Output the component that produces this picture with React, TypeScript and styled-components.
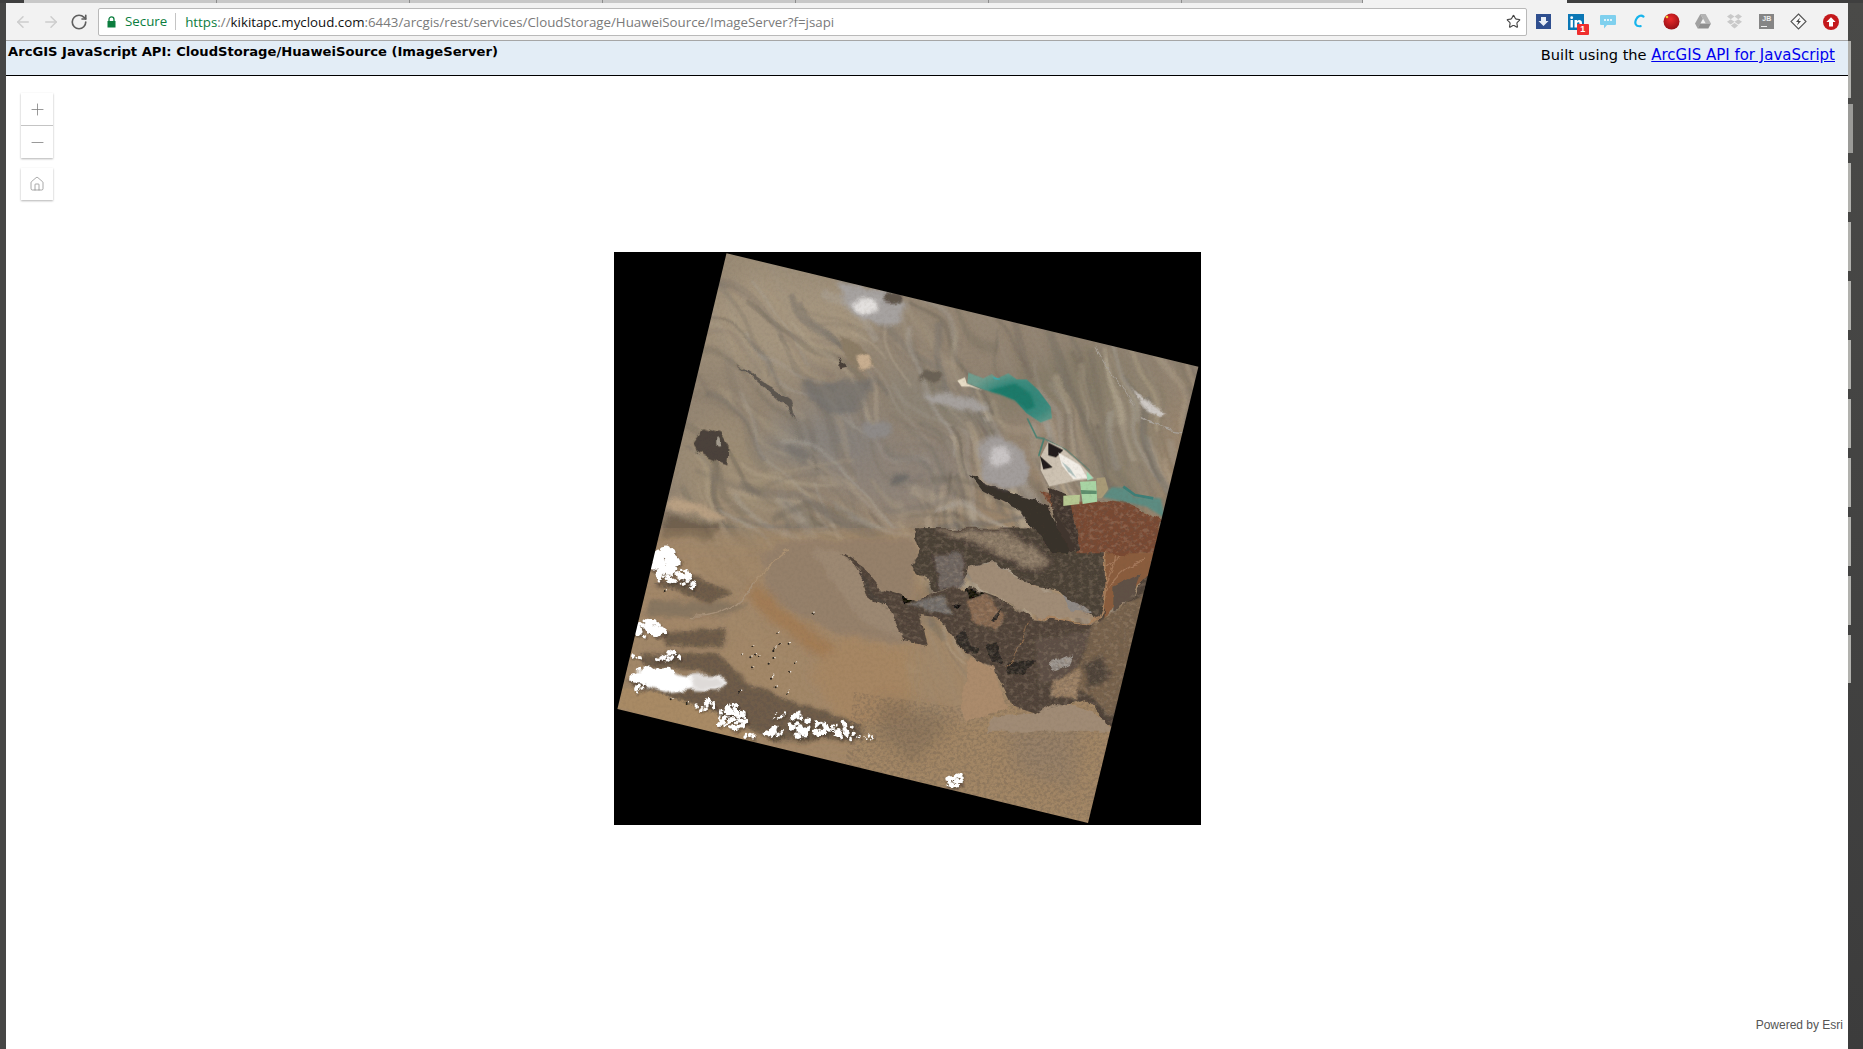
import React from "react";
import styled, { createGlobalStyle } from "styled-components";
import { ArrowLeft, ArrowRight, RotateCw, Star, Plus, Minus, House } from "lucide-react";

const Global = createGlobalStyle`
  html, body { margin: 0; padding: 0; width: 1863px; height: 1049px; overflow: hidden; background: #414141; }
  #root { width: 1863px; height: 1049px; }
`;

const Screen = styled.div`
  width: 1863px;
  height: 1049px;
  display: flex;
  flex-direction: column;
  background: #434342;
`;
const TabStrip = styled.div`
  height: 3px;
  flex: none;
  display: flex;
  padding-left: 24px;
  background: #3f3f3f;
`;
const TabSliver = styled.div<{ $w: number; $active?: boolean }>`
  width: ${(p) => p.$w}px;
  flex: none;
  box-sizing: border-box;
  background: ${(p) => (p.$active ? "#f2f2f2" : "#c8c8c8")};
  border-right: ${(p) => (p.$active ? "0" : "1px solid #8d8d8d")};
`;
const Middle = styled.div`
  flex: 1;
  min-height: 0;
  display: flex;
`;
const LeftEdge = styled.div`
  width: 6px;
  flex: none;
  background: #464645;
`;
const Browser = styled.div`
  width: 1842px;
  flex: none;
  display: flex;
  flex-direction: column;
  background: #fff;
`;
const Toolbar = styled.div`
  height: 38px;
  flex: none;
  display: flex;
  align-items: center;
  background: #f2f2f2;
  border-bottom: 1px solid #a6a6a6;
  box-sizing: border-box;
`;
const Nav = styled.div`
  width: 92px;
  flex: none;
  display: flex;
  align-items: center;
  padding-left: 8px;
  gap: 10px;
  box-sizing: border-box;
`;
const NavSlot = styled.span<{ $c: string }>`
  width: 18px;
  height: 18px;
  display: flex;
  color: ${(p) => p.$c};
`;
const Omnibox = styled.div`
  width: 1429px;
  height: 28px;
  flex: none;
  box-sizing: border-box;
  display: flex;
  align-items: center;
  background: #fff;
  border: 1px solid #b9b9b9;
  border-radius: 2px;
  padding: 0 5px 0 8px;
  font: 13.3px "Open Sans", sans-serif;
`;
const Secure = styled.span`
  color: #0b7d3e;
  margin-left: 9px;
  padding-right: 8px;
  margin-right: 9px;
  border-right: 1px solid #c4c4c4;
  line-height: 17px;
`;
const Url = styled.span`
  flex: 1;
  white-space: nowrap;
  color: #7a7a7a;
`;
const Scheme = styled.span`
  color: #0b7d3e;
`;
const Host = styled.span`
  color: #111;
`;
const Extensions = styled.div`
  display: flex;
  padding-left: 1px;
`;
const Ext = styled.span`
  position: relative;
  width: 31.85px;
  height: 20px;
  display: flex;
  align-items: center;
  justify-content: center;
  flex: none;
`;
const Badge = styled.span`
  position: absolute;
  left: 17px;
  top: 12px;
  width: 12px;
  height: 11px;
  border-radius: 1px;
  background: #ef2f2f;
  color: #fff;
  font: bold 9px/11px "Liberation Sans", sans-serif;
  text-align: center;
`;
const JB = styled.span`
  width: 15px;
  height: 15px;
  box-sizing: border-box;
  padding: 1px 0 0 3px;
  background: #858585;
  color: #eee;
  font: bold 7px/8px "Liberation Sans", sans-serif;
  position: relative;
  &::after {
    content: "";
    position: absolute;
    left: 2px;
    bottom: 2px;
    width: 6px;
    height: 1px;
    background: #eee;
  }
`;
const Header = styled.header`
  height: 35px;
  flex: none;
  box-sizing: border-box;
  display: flex;
  justify-content: space-between;
  background: #e3edf6;
  border-bottom: 1px solid #000;
  padding: 2px 13px 0 2px;
  color: #000;
`;
const Title = styled.h1`
  margin: 0;
  font: bold 13.13px/17px "DejaVu Sans", sans-serif;
`;
const Built = styled.div`
  padding-top: 3px;
  font: 14.6px/18px "DejaVu Sans", sans-serif;
`;
const ApiLink = styled.a`
  color: #0000ee;
  font-size: 15px;
`;
const MapView = styled.main`
  position: relative;
  flex: 1;
  min-height: 0;
  padding: 176px 0 0 608px;
  background: #fff;
`;
const WidgetStack = styled.div`
  position: absolute;
  left: 15px;
  top: 17px;
  display: flex;
  flex-direction: column;
  gap: 10px;
`;
const WidgetGroup = styled.div`
  display: flex;
  flex-direction: column;
  width: 32px;
  background: #fff;
  box-shadow: 0 1px 2px rgba(0, 0, 0, 0.3);
`;
const WidgetButton = styled.div`
  width: 32px;
  height: 32px;
  display: flex;
  align-items: center;
  justify-content: center;
  color: #7d7d7d;
  & + & {
    border-top: 1px solid #c4c4c4;
  }
`;
const Attribution = styled.div`
  position: absolute;
  right: 5px;
  bottom: 17px;
  font: 12px/14px "Liberation Sans", sans-serif;
  color: #555;
`;
const RightEdge = styled.div`
  flex: 1;
  display: flex;
  flex-direction: column;
  padding-top: 38px;
  background: linear-gradient(#4a4a48, #3c3c3c);
`;
const Tick = styled.div<{ $h: number; $gap: number; $thumb?: boolean }>`
  flex: none;
  height: ${(p) => p.$h}px;
  width: ${(p) => (p.$thumb ? 5 : 3)}px;
  margin-bottom: ${(p) => p.$gap}px;
  background: ${(p) => (p.$thumb ? "#9b9b98" : "#b1b1ad")};
`;

function rng(seed: number) {
  let s = seed;
  return () => {
    s = (s * 16807) % 2147483647;
    return (s - 1) / 2147483646;
  };
}

type Cl = [number, number, number, number, number, number];
// cx, cy, rx, ry, count, blob radius — in 3x coordinates of the lower-left crop
const clouds: Cl[] = [
  [165, 62, 38, 34, 60, 12],
  [190, 105, 60, 22, 36, 8],
  [235, 128, 24, 14, 9, 6],
  [115, 268, 38, 24, 34, 10],
  [152, 275, 16, 8, 7, 8],
  [75, 350, 18, 6, 6, 6],
  [175, 350, 30, 12, 18, 6],
  [125, 410, 60, 26, 60, 11],
  [85, 440, 12, 18, 8, 6],
  [290, 495, 34, 14, 18, 6],
  [370, 530, 44, 40, 80, 7],
  [420, 585, 20, 6, 8, 6],
  [490, 575, 30, 16, 16, 9],
  [570, 555, 30, 34, 40, 8],
  [630, 565, 26, 22, 26, 8],
  [700, 575, 40, 26, 36, 6],
  [760, 590, 30, 8, 10, 4],
  [500, 525, 26, 8, 12, 4],
  [1030, 722, 26, 20, 34, 7],
];

const dots: [number, number][] = [
  [500, 278], [432, 318], [495, 325], [512, 315], [538, 314], [392, 340], [437, 347], [450, 352],
  [498, 345], [420, 355], [478, 368], [558, 372], [428, 382], [536, 390], [488, 410], [496, 436],
  [535, 455], [395, 458], [190, 475], [232, 486], [160, 153], [615, 218],
];

function CloudField() {
  const r = rng(4242);
  const items: React.ReactNode[] = [];
  const shadows: React.ReactNode[] = [];
  clouds.forEach((c, i) => {
    for (let k = 0; k < c[4]; k++) {
      const a = r() * Math.PI * 2;
      const d = Math.sqrt(r());
      const x = c[0] + Math.cos(a) * d * c[2];
      const y = c[1] + Math.sin(a) * d * c[3];
      const rad = c[5] * (0.4 + r() * 0.7);
      items.push(<circle key={`${i}-${k}`} cx={x} cy={y} r={rad} fill="#fff" />);
      shadows.push(<circle key={`${i}-${k}`} cx={x + 4} cy={y + 6} r={rad} fill="#2b2520" />);
    }
  });
  return (
    <g transform="translate(-4,288) scale(.3333)">
      <g opacity=".45" filter="url(#b1)">{shadows}</g>
      <path d="M80 395 L140 385 L230 410 L330 405 L348 430 L320 452 L240 448 L170 460 L110 440Z" fill="#fff" filter="url(#b1)" />
      <g filter="url(#b05)">{items}</g>
      <path d="M240 405 L325 408 L345 430 L320 450 L250 448Z" fill="#dedad8" filter="url(#b2)" />
      {dots.map((d, i) => (
        <g key={i}>
          <circle cx={d[0] - 2} cy={d[1] + 3} r="3" fill="#26211d" />
          <circle cx={d[0] + 3} cy={d[1] - 1} r="2.2" fill="#f1ece6" />
        </g>
      ))}
    </g>
  );
}

function WindLines() {
  const r = rng(991);
  const paths: React.ReactNode[] = [];
  const light = ["#b9aa90", "#c4b69e", "#ac9c84", "#b0aca6"];
  const dark = ["#6f665c", "#655d52", "#7b7266", "#6c6864"];
  const add = (n: number, x0: number, x1: number, y0: number, y1: number, ang: number, spread: number, curl: number, key: string) => {
    for (let i = 0; i < n; i++) {
      const x = x0 + r() * (x1 - x0);
      const y = y0 + r() * (y1 - y0);
      const a = ((ang + (r() - 0.5) * spread) * Math.PI) / 180;
      const len = 50 + r() * 120;
      const bend = (r() - 0.5) * curl;
      const ex = x + Math.cos(a) * len;
      const ey = y + Math.sin(a) * len;
      const mx = (x + ex) / 2 - Math.sin(a) * bend;
      const my = (y + ey) / 2 + Math.cos(a) * bend;
      const pal = r() > 0.5 ? light : dark;
      paths.push(
        <path
          key={key + i}
          d={`M${x.toFixed(1)} ${y.toFixed(1)}Q${mx.toFixed(1)} ${my.toFixed(1)} ${ex.toFixed(1)} ${ey.toFixed(1)}`}
          stroke={pal[Math.floor(r() * pal.length)]}
          strokeWidth={1.5 + r() * 7}
          strokeOpacity={0.15 + r() * 0.25}
          fill="none"
        />,
      );
    }
  };
  add(120, 60, 340, 10, 320, 48, 40, 60, "a");
  add(170, 300, 570, 70, 340, 70, 12, 22, "b");
  add(70, 60, 340, 220, 340, 20, 50, 70, "c");
  return <g filter="url(#b03)">{paths}</g>;
}

const massifD =
  "M65 70 L130 112 L185 180 L240 197 L295 215 L340 185 L420 172 L435 185 L445 170 L540 205 L640 265 L820 282 L905 235 L985 130 L965 320 L880 590 L800 510 L640 550 L580 530 L530 430 L440 370 L380 290 L340 260 L300 255 L320 345 L250 330 L215 250 L140 190 L120 130 Z";
const upperDarkD =
  "M280 -5 L860 -10 L850 275 L790 250 L720 180 L640 165 L520 95 L445 115 L420 175 L345 180 L300 135 L270 105 L300 60 Z";
const bandsD =
  "M130 130 L260 110 L370 160 L300 190 L180 150Z M160 280 L350 260 L340 320 L170 320Z M90 340 L330 340 L400 420 L260 390 L100 380Z M40 420 L340 400 L560 490 L780 560 L760 600 L500 600 L300 520Z";

function SatelliteImage() {
  return (
    <svg width="587" height="573" viewBox="0 0 587 573" style={{ display: "block" }}>
      <defs>
        <clipPath id="scene">
          <polygon points="112.5,1.3 584.4,114.7 474,571 3.4,457" />
        </clipPath>
        <clipPath id="massifClip">
          <path transform="translate(206,278) scale(.3333)" d={massifD + " " + upperDarkD} />
        </clipPath>
        <clipPath id="bandClip">
          <path transform="translate(-4,288) scale(.3333)" d={bandsD} />
        </clipPath>
        <clipPath id="southClip">
          <polygon points="240,440 340,455 420,430 510,420 475,575 230,520" />
        </clipPath>
        <clipPath id="deltaClip">
          <path transform="translate(306,98) scale(.3333)" d="M360 420 L480 455 L560 450 L610 455 L725 510 L700 610 L470 610 L440 540Z" />
        </clipPath>
        <linearGradient id="land" x1="0" y1="0" x2="0.35" y2="1">
          <stop offset="0" stopColor="#9a8b75" />
          <stop offset=".45" stopColor="#918372" />
          <stop offset=".72" stopColor="#a18769" />
          <stop offset="1" stopColor="#a38767" />
        </linearGradient>
        <radialGradient id="lake" cx=".6" cy=".55" r=".6">
          <stop offset="0" stopColor="#2a8273" />
          <stop offset=".6" stopColor="#3b8b7e" />
          <stop offset="1" stopColor="#6f9c8d" />
        </radialGradient>
        <filter id="soft" filterUnits="userSpaceOnUse" x="0" y="0" width="587" height="573">
          <feGaussianBlur stdDeviation=".6" />
        </filter>
        <filter id="b03"><feGaussianBlur stdDeviation="1.2" /></filter>
        <filter id="b05" x="-20%" y="-20%" width="140%" height="140%"><feGaussianBlur stdDeviation="1.3" /></filter>
        <filter id="b1" x="-30%" y="-30%" width="160%" height="160%"><feGaussianBlur stdDeviation="3" /></filter>
        <filter id="b2" x="-40%" y="-40%" width="180%" height="180%"><feGaussianBlur stdDeviation="7" /></filter>
        <filter id="b4" x="-50%" y="-50%" width="200%" height="200%"><feGaussianBlur stdDeviation="14" /></filter>
        <filter id="b8" x="-60%" y="-60%" width="220%" height="220%"><feGaussianBlur stdDeviation="30" /></filter>
        <filter id="rough" filterUnits="userSpaceOnUse" x="0" y="0" width="587" height="573">
          <feTurbulence type="fractalNoise" baseFrequency="0.06" numOctaves="4" seed="7" result="n" />
          <feDisplacementMap in="SourceGraphic" in2="n" scale="9" xChannelSelector="R" yChannelSelector="G" />
        </filter>
        <filter id="swirl" filterUnits="userSpaceOnUse" x="0" y="0" width="587" height="573">
          <feTurbulence type="fractalNoise" baseFrequency="0.012" numOctaves="2" seed="3" result="n" />
          <feDisplacementMap in="SourceGraphic" in2="n" scale="40" xChannelSelector="R" yChannelSelector="G" />
        </filter>
        <filter id="streak" x="-20%" y="-20%" width="140%" height="140%">
          <feTurbulence type="fractalNoise" baseFrequency="0.005 0.11" numOctaves="4" seed="11" />
          <feColorMatrix values="0 0 0 0 .35  0 0 0 0 .32  0 0 0 0 .28  1.9 0 0 0 -.62" />
        </filter>
        <filter id="grain" x="0" y="0" width="100%" height="100%">
          <feTurbulence type="fractalNoise" baseFrequency="0.32" numOctaves="3" seed="5" />
          <feColorMatrix values="0 0 0 0 .12  0 0 0 0 .09  0 0 0 0 .06  2.6 0 0 0 -1.15" />
        </filter>
        <filter id="ridge" x="0" y="0" width="100%" height="100%">
          <feTurbulence type="fractalNoise" baseFrequency="0.3 0.36" numOctaves="3" seed="9" />
          <feColorMatrix values="0 0 0 0 .12  0 0 0 0 .09  0 0 0 0 .07  4 0 0 0 -1.7" />
        </filter>
        <filter id="ridgeHi" x="0" y="0" width="100%" height="100%">
          <feTurbulence type="fractalNoise" baseFrequency="0.2 0.26" numOctaves="3" seed="31" />
          <feColorMatrix values="0 0 0 0 .72  0 0 0 0 .55  0 0 0 0 .4  4 0 0 0 -1.9" />
        </filter>
      </defs>
      <rect width="587" height="573" fill="#000" />
      <g clipPath="url(#scene)">
        <g filter="url(#soft)">
          <rect width="587" height="573" fill="url(#land)" />

          {/* broad colour fields and swirls */}
          <g filter="url(#swirl)">
            <g filter="url(#b4)">
              <ellipse cx="170" cy="70" rx="90" ry="55" fill="#a5957e" />
              <ellipse cx="120" cy="220" rx="70" ry="50" fill="#9c8c75" />
              <ellipse cx="215" cy="190" rx="60" ry="28" fill="#84807c" opacity=".85" />
              <ellipse cx="290" cy="225" rx="70" ry="28" fill="#8c8379" opacity=".85" />
              <ellipse cx="330" cy="150" rx="55" ry="30" fill="#8a8172" />
              <ellipse cx="460" cy="130" rx="80" ry="30" fill="#857a68" />
              <ellipse cx="510" cy="200" rx="46" ry="80" fill="#8f8370" />
              <ellipse cx="60" cy="340" rx="40" ry="60" fill="#a0846a" />
              <ellipse cx="120" cy="290" rx="55" ry="40" fill="#98866f" />
            </g>
            <WindLines />
          </g>
          <g transform="rotate(68 430 190)" opacity=".14">
            <rect x="240" y="0" width="400" height="380" filter="url(#streak)" />
          </g>

          {/* upper-left features, 3x-wide crop coordinates */}
          <g filter="url(#rough)">
            <g transform="translate(-14,-12) scale(.3953,.3333)">
              <path d="M600 125 L720 155 L775 190 L760 250 L700 255 L640 225 L610 170Z" fill="#a6a2a0" filter="url(#b2)" />
              <ellipse cx="672" cy="198" rx="32" ry="24" fill="#e3e0de" filter="url(#b2)" />
              <ellipse cx="738" cy="176" rx="25" ry="17" fill="#5f554c" filter="url(#b1)" />
              <path d="M605 290 L655 310 L695 375 L660 392 L620 360Z" fill="#8b7b66" filter="url(#b1)" />
              <path d="M645 345 L680 350 L692 382 L660 390Z" fill="#c8ae90" filter="url(#b1)" />
              <path d="M598 350 L625 380 L608 385Z" fill="#4a3f37" />
              <path d="M345 370 L480 480 L495 540 L470 500 Z" fill="#5c5650" filter="url(#b05)" />
              <path d="M510 430 L700 420 L650 520 L560 520Z" fill="#72706e" filter="url(#b2)" opacity=".7" />
              <path d="M470 610 L530 630 L525 665 L480 650Z" fill="#716d69" filter="url(#b2)" opacity=".6" />
              <ellipse cx="700" cy="570" rx="38" ry="26" fill="#8e8a88" filter="url(#b2)" />
              <ellipse cx="835" cy="412" rx="28" ry="18" fill="#6b6255" filter="url(#b1)" />
              <ellipse cx="760" cy="720" rx="28" ry="14" fill="#6d6a66" filter="url(#b2)" />
              <path d="M235 605 L262 562 L305 578 L325 620 L322 680 L280 660 L245 635Z" fill="#4c433b" />
              <ellipse cx="300" cy="605" rx="6" ry="12" fill="#a59d90" />
              <path d="M165 820 L300 860 L290 900 L150 900Z" fill="#5c5040" opacity=".65" filter="url(#b2)" />
              <path d="M160 800 L330 850 L310 820 L190 770Z" fill="#b9a083" filter="url(#b2)" />
            </g>
          </g>

          {/* lower-left plain, mountains */}
          <g filter="url(#rough)">
            <g transform="translate(-4,288) scale(.3333)">
              <path d="M-20 -20 L940 -20 L940 640 L-20 640Z" fill="#a38869" filter="url(#b8)" opacity=".85" />
              <path d="M460 30 L560 0 L920 0 L900 310 L700 290 L470 170Z" fill="#95806a" filter="url(#b2)" />
              <path d="M600 30 L700 30 L900 300 L760 250Z" fill="#9c8872" filter="url(#b2)" />
              <path d="M440 130 C520 250 680 280 760 430 L700 450 C620 300 500 280 410 160Z" fill="#a27a53" filter="url(#b4)" />
              <path d="M700 290 L900 330 L900 600 L700 560 L600 400Z" fill="#a68664" filter="url(#b4)" />
              <path d="M120 180 L420 190 L340 230 L110 230Z" fill="#887660" filter="url(#b2)" />
              <path d={bandsD} fill="#6f5d49" filter="url(#b2)" />
              <path d="M20 505 L40 440 L200 475 L330 520 L440 600 L380 600Z" fill="#a88a65" filter="url(#b1)" />
              <path d="M540 30 C500 40 470 90 430 130" stroke="#ab9172" strokeWidth="4" fill="none" />
              <path d="M430 130 C400 190 320 240 240 230" stroke="#a8927a" strokeWidth="4" fill="none" />
            </g>
          </g>
          <g clipPath="url(#bandClip)">
            <rect width="587" height="573" filter="url(#ridge)" opacity=".45" />
          </g>
          {/* rough southern terrain */}
          <g filter="url(#rough)">
            <path d="M250 470 L360 470 L420 440 L500 430 L470 575 L240 520Z" fill="#a38766" filter="url(#b1)" />
            <path d="M270 445 L340 470 L300 510 L260 480Z" fill="#7f6a54" filter="url(#b2)" opacity=".5" />
            <path d="M390 470 L470 470 L460 540 L400 520Z" fill="#8f7c68" filter="url(#b2)" opacity=".5" />
          </g>
          <g clipPath="url(#southClip)">
            <rect width="587" height="573" filter="url(#ridge)" opacity=".26" />
          </g>

          {/* dark massif */}
          <g filter="url(#rough)">
            <g transform="translate(206,278) scale(.3333)">
              <path d="M860 -10 L1030 -10 L985 140 L890 210 L850 270 L820 260 Z" fill="#8a5c3e" />
              <path d={upperDarkD} fill="#4a3f36" />
              <path d="M350 0 L560 0 L700 100 L640 120 L480 50Z" fill="#8d7c68" filter="url(#b2)" />
              <path d="M340 75 L430 70 L430 170 L360 175 Z" fill="#6f6863" filter="url(#b1)" />
              <path d="M445 115 L520 100 L640 170 L730 195 L825 265 L660 262 L560 212 L450 160 Z" fill="#a08c76" />
              <path d="M730 190 L815 250 L760 245Z" fill="#8f8a86" filter="url(#b05)" />
              <path d={massifD} fill="#4f4338" />
              <path d="M260 225 L370 195 L395 250 L330 245Z" fill="#74716e" filter="url(#b1)" />
              <path d="M440 205 L495 195 L560 250 L530 300 L470 285Z" fill="#8b6c53" filter="url(#b1)" />
              <path d="M640 330 L820 300 L760 430 L660 470Z" fill="#5d5044" filter="url(#b1)" />
              <path d="M820 280 L985 180 L950 330 L880 560 L790 480 L700 460 L780 400Z" fill="#78634e" filter="url(#b1)" />
              <path d="M790 400 L850 375 L870 440 L810 480Z" fill="#4e4339" filter="url(#b2)" />
              <path d="M690 400 L760 370 L750 405 L700 425Z" fill="#9d9791" filter="url(#b05)" />
              <path d="M880 170 L960 130 L930 210 L880 240Z" fill="#5f5145" filter="url(#b05)" />
              <path d="M705 450 L780 415 L770 510 L690 490Z" fill="#9d8266" filter="url(#b1)" />
              <path d="M520 560 L640 550 L700 515 L860 565 L880 605 L500 605Z" fill="#a08b74" />
              <path d="M450 385 L520 410 L560 530 L440 580 L420 540Z" fill="#ab8b6c" />
              <path d="M100 110 L180 200 L200 240 L150 190Z" fill="#4a3f38" />
              <path d="M505 275 L550 225 L530 270Z" fill="#2c2623" />
              <path d="M245 198 L285 213 L255 216Z" fill="#080706" />
              <path d="M438 177 L492 190 L445 200Z" fill="#080706" />
              <path d="M400 225 L425 228 L410 240Z" fill="#111" />
              <path d="M430 290 L460 360 L440 370 L410 320Z" fill="#2f2925" filter="url(#b05)" />
              <path d="M450 345 L475 350 L470 375 L455 370Z M495 345 L530 340 L545 400 L515 395Z M560 395 L650 385 L610 430 L570 440Z" fill="#2a2622" filter="url(#b05)" />
              <path d="M660 262 C720 268 770 285 800 282 C840 275 850 240 855 190 C858 130 860 50 850 0" stroke="#a9835f" strokeWidth="5" fill="none" />
              <path d="M850 200 C880 140 920 110 975 90 M860 110 C900 70 930 50 990 40 M855 170 C880 120 900 60 880 0" stroke="#a5795a" strokeWidth="4" fill="none" />
              <path d="M625 275 C610 330 590 370 560 410" stroke="#98704e" strokeWidth="3" fill="none" />
            </g>
          </g>
          <g clipPath="url(#massifClip)">
            <rect width="587" height="573" filter="url(#ridge)" opacity=".3" />
            <rect width="587" height="573" filter="url(#ridgeHi)" opacity=".16" />
          </g>

          {/* salt lake, ponds, delta */}
          <g filter="url(#rough)">
            <g transform="translate(306,98) scale(.3333)">
              <path d="M360 420 L480 455 L560 450 L610 455 L725 510 L700 610 L470 610 L440 540Z" fill="#7a4a32" />
              <path d="M380 410 L450 440 L480 600 L430 600Z" fill="#3f342d" />
              <path d="M150 375 L245 420 L345 450 L385 470 L450 610 L400 610 L300 480 L190 425 Z" fill="#38302b" />
              <path d="M170 280 L240 255 L310 300 L330 360 L320 410 L250 420 L190 385Z" fill="#a29d9b" filter="url(#b2)" />
              <ellipse cx="240" cy="320" rx="36" ry="30" fill="#c9c5c5" filter="url(#b2)" />
              <path d="M0 135 L90 125 L210 170 L170 190 L40 160Z" fill="#a6a19e" filter="url(#b2)" />
              <path d="M630 110 L665 140 L735 190 L720 200 L670 170Z" fill="#cfcac6" filter="url(#b1)" />
              <path d="M660 200 C700 225 750 240 790 245" stroke="#a9a39b" strokeWidth="4" fill="none" />
              <path d="M525 -5 C570 70 610 110 640 170" stroke="#aaa39a" strokeWidth="3" fill="none" />
            </g>
          </g>
          <g clipPath="url(#deltaClip)">
            <rect width="587" height="573" filter="url(#ridge)" opacity=".3" />
            <rect width="587" height="573" filter="url(#ridgeHi)" opacity=".18" />
          </g>
          <g transform="translate(306,98) scale(.3333)">
            <path d="M145 68 L190 85 L215 72 L232 85 L265 70 L290 88 L320 88 L355 120 L392 170 L396 205 L362 218 L320 190 L285 150 L240 132 L195 120 L142 100 Z" fill="url(#lake)" filter="url(#b05)" />
            <path d="M205 122 L285 100 L330 130 L345 170 L320 180 L285 150 L240 132Z" fill="#1c7a6a" filter="url(#b1)" />
            <path d="M112 92 L135 82 L140 100 L190 122 L150 110 L125 110Z" fill="#e6dcc6" filter="url(#b05)" />
            <path d="M220 84 L240 88" stroke="#25b8c4" strokeWidth="3" />
            <path d="M322 205 L350 262 L372 266 L356 318" stroke="#4c8273" strokeWidth="5" fill="none" />
            <path d="M372 266 L440 300 L510 362" stroke="#4f7d70" strokeWidth="3" fill="none" />
            <path d="M362 320 L385 275 L425 292 L480 340 L522 385 L470 392 L388 410 L362 360Z" fill="#cdc2b2" filter="url(#b05)" />
            <path d="M385 278 L430 300 L408 322 L385 316Z M360 318 L398 352 L370 358Z" fill="#231e1b" filter="url(#b05)" />
            <path d="M415 308 L480 345 L503 385 L460 388 L425 345Z" fill="#f2eee6" filter="url(#b05)" />
            <path d="M500 365 L520 385 L502 392Z" fill="#9edbb6" />
            <path d="M425 335 L450 355 L470 385 L445 365Z" fill="#9fb6b4" opacity=".8" />
            <path d="M548 442 L575 412 L620 415 L640 440 L722 445 L735 505 L680 470 L600 452Z" fill="#5c8c82" filter="url(#b1)" />
            <path d="M610 410 L645 435 L700 445" stroke="#3d7f78" strokeWidth="8" fill="none" />
            <path d="M480 395 L528 393 L532 455 L488 462Z" fill="#a8d4a4" filter="url(#b05)" />
            <path d="M482 420 L530 422 L530 432 L484 432Z" fill="#5f8f6e" />
            <path d="M430 437 L480 434 L478 462 L430 468Z" fill="#b7c892" filter="url(#b05)" />
            <path d="M530 384 L555 382 L565 418 L545 445 L532 445Z" fill="#a89a77" filter="url(#b05)" />
          </g>

          <rect width="587" height="573" filter="url(#grain)" opacity=".08" />
          <g filter="url(#rough)">
            <CloudField />
          </g>
        </g>
      </g>
    </svg>
  );
}

const tickRows: { h: number; gap: number; thumb?: boolean }[] = [
  { h: 57, gap: 6 },
  { h: 49, gap: 10, thumb: true },
  { h: 49, gap: 10 },
  { h: 49, gap: 10 },
  { h: 49, gap: 10 },
  { h: 49, gap: 10 },
  { h: 49, gap: 10 },
  { h: 49, gap: 10 },
  { h: 49, gap: 10 },
  { h: 49, gap: 10 },
  { h: 48, gap: 0 },
];

const tabWidths = [193, 193, 193, 193, 193, 193, 181];

export default function App() {
  return (
    <Screen>
      <Global />
      <TabStrip>
        {tabWidths.map((w, i) => (
          <TabSliver key={i} $w={w} />
        ))}
        <TabSliver $w={204} $active />
      </TabStrip>
      <Middle>
        <LeftEdge />
        <Browser>
          <Toolbar>
            <Nav>
              <NavSlot $c="#cdcdcd"><ArrowLeft size={18} strokeWidth={2} /></NavSlot>
              <NavSlot $c="#cdcdcd"><ArrowRight size={18} strokeWidth={2} /></NavSlot>
              <NavSlot $c="#5f5f5f"><RotateCw size={18} strokeWidth={2.2} /></NavSlot>
            </Nav>
            <Omnibox>
              <svg width="9" height="12" viewBox="0 0 9 12">
                <path d="M2 5V3.4a2.5 2.5 0 0 1 5 0V5" fill="none" stroke="#0b7d3e" strokeWidth="1.3" />
                <rect x="0.5" y="5" width="8" height="6.5" fill="#0b7d3e" />
              </svg>
              <Secure>Secure</Secure>
              <Url>
                <Scheme>https</Scheme>://<Host>kikitapc.mycloud.com</Host>:6443/arcgis/rest/services/CloudStorage/HuaweiSource/ImageServer?f=jsapi
              </Url>
              <Star size={15} strokeWidth={1.8} color="#444" />
            </Omnibox>
            <Extensions>
              <Ext>
                <svg width="15" height="15" viewBox="0 0 15 15">
                  <rect width="15" height="15" fill="#2f4f8f" />
                  <path d="M5 3h5v4h2.5L7.5 12 2.5 7H5Z" fill="#e8eef6" />
                </svg>
              </Ext>
              <Ext>
                <svg width="16" height="16" viewBox="0 0 16 16">
                  <rect width="16" height="16" fill="#0b77b5" />
                  <rect x="2.5" y="6" width="2.4" height="7.5" fill="#fff" />
                  <circle cx="3.7" cy="3.7" r="1.4" fill="#fff" />
                  <path d="M6.5 6H9v1.1C10.4 5.4 14 5.6 14 9v4.5h-2.5V9.6C11.5 7.6 9 7.8 9 9.8v3.7H6.5Z" fill="#fff" />
                </svg>
                <Badge>1</Badge>
              </Ext>
              <Ext>
                <svg width="16" height="14" viewBox="0 0 16 14">
                  <path d="M1 0h14a1 1 0 0 1 1 1v8a1 1 0 0 1-1 1H7l-3 3.5V10H1a1 1 0 0 1-1-1V1a1 1 0 0 1 1-1Z" fill="#7fd0ee" />
                  <circle cx="5" cy="5" r="1" fill="#fff" /><circle cx="8" cy="5" r="1" fill="#fff" /><circle cx="11" cy="5" r="1" fill="#fff" />
                </svg>
              </Ext>
              <Ext>
                <svg width="12" height="15" viewBox="0 0 12 15">
                  <path d="M10.5 2.6C8 .4 4.6 2 3 5.6c-1.6 3.8-.4 7.2 4.6 6.6" fill="none" stroke="#16b4ec" strokeWidth="2.2" strokeLinecap="round" />
                </svg>
              </Ext>
              <Ext>
                <svg width="17" height="17" viewBox="0 0 17 17">
                  <defs>
                    <radialGradient id="ball" cx=".45" cy=".35" r=".7">
                      <stop offset="0" stopColor="#ec2a2a" />
                      <stop offset="1" stopColor="#8f0d14" />
                    </radialGradient>
                  </defs>
                  <circle cx="8.5" cy="8.5" r="8" fill="url(#ball)" />
                  <circle cx="4" cy="4" r="1.3" fill="#f2d23a" />
                </svg>
              </Ext>
              <Ext>
                <svg width="16" height="15" viewBox="0 0 16 15">
                  <path d="M5.4 0h5.2l5.4 9.6h-5.2Z" fill="#b3b3b3" />
                  <path d="M5.4 0 8 4.7 2.7 14.4 0 9.6Z" fill="#a1a1a1" />
                  <path d="M5.2 9.6H16L13.3 14.4H2.7Z" fill="#8f8f8f" />
                </svg>
              </Ext>
              <Ext>
                <svg width="15" height="15" viewBox="0 0 15 15" fill="#c9c9c9">
                  <path d="M3.7 0 7.5 2.6 3.7 5.2 0 2.6Z" /><path d="M11.3 0 15 2.6l-3.7 2.6L7.5 2.6Z" />
                  <path d="M3.7 5.2 7.5 7.8 3.7 10.4 0 7.8Z" /><path d="M11.3 5.2 15 7.8l-3.7 2.6L7.5 7.8Z" />
                  <path d="M3.8 11.4 7.5 9l3.7 2.4L7.5 14.4Z" />
                </svg>
              </Ext>
              <Ext><JB>JB</JB></Ext>
              <Ext>
                <svg width="17" height="17" viewBox="0 0 17 17">
                  <path d="M8.5 1 16 8.5 8.5 16 1 8.5Z" fill="#fafafa" stroke="#555" strokeWidth="1.1" />
                  <path d="M10 4.5 6 9h2.3L7 12.5 11 8H8.7Z" fill="#444" />
                </svg>
              </Ext>
              <Ext>
                <svg width="16" height="16" viewBox="0 0 16 16">
                  <circle cx="8" cy="8" r="8" fill="#c4191c" />
                  <path d="M8 3.2 12.6 8H10v4.4H6V8H3.4Z" fill="#fff" />
                </svg>
              </Ext>
            </Extensions>
          </Toolbar>
          <Header>
            <Title>ArcGIS JavaScript API: CloudStorage/HuaweiSource (ImageServer)</Title>
            <Built>
              Built using the <ApiLink href="#arcgis">ArcGIS API for JavaScript</ApiLink>
            </Built>
          </Header>
          <MapView>
            <SatelliteImage />
            <WidgetStack>
              <WidgetGroup>
                <WidgetButton><Plus size={19} strokeWidth={1} /></WidgetButton>
                <WidgetButton><Minus size={19} strokeWidth={1} /></WidgetButton>
              </WidgetGroup>
              <WidgetGroup>
                <WidgetButton><House size={16} strokeWidth={1} /></WidgetButton>
              </WidgetGroup>
            </WidgetStack>
            <Attribution>Powered by Esri</Attribution>
          </MapView>
        </Browser>
        <RightEdge>
          {tickRows.map((t, i) => (
            <Tick key={i} $h={t.h} $gap={t.gap} $thumb={t.thumb} />
          ))}
        </RightEdge>
      </Middle>
    </Screen>
  );
}
